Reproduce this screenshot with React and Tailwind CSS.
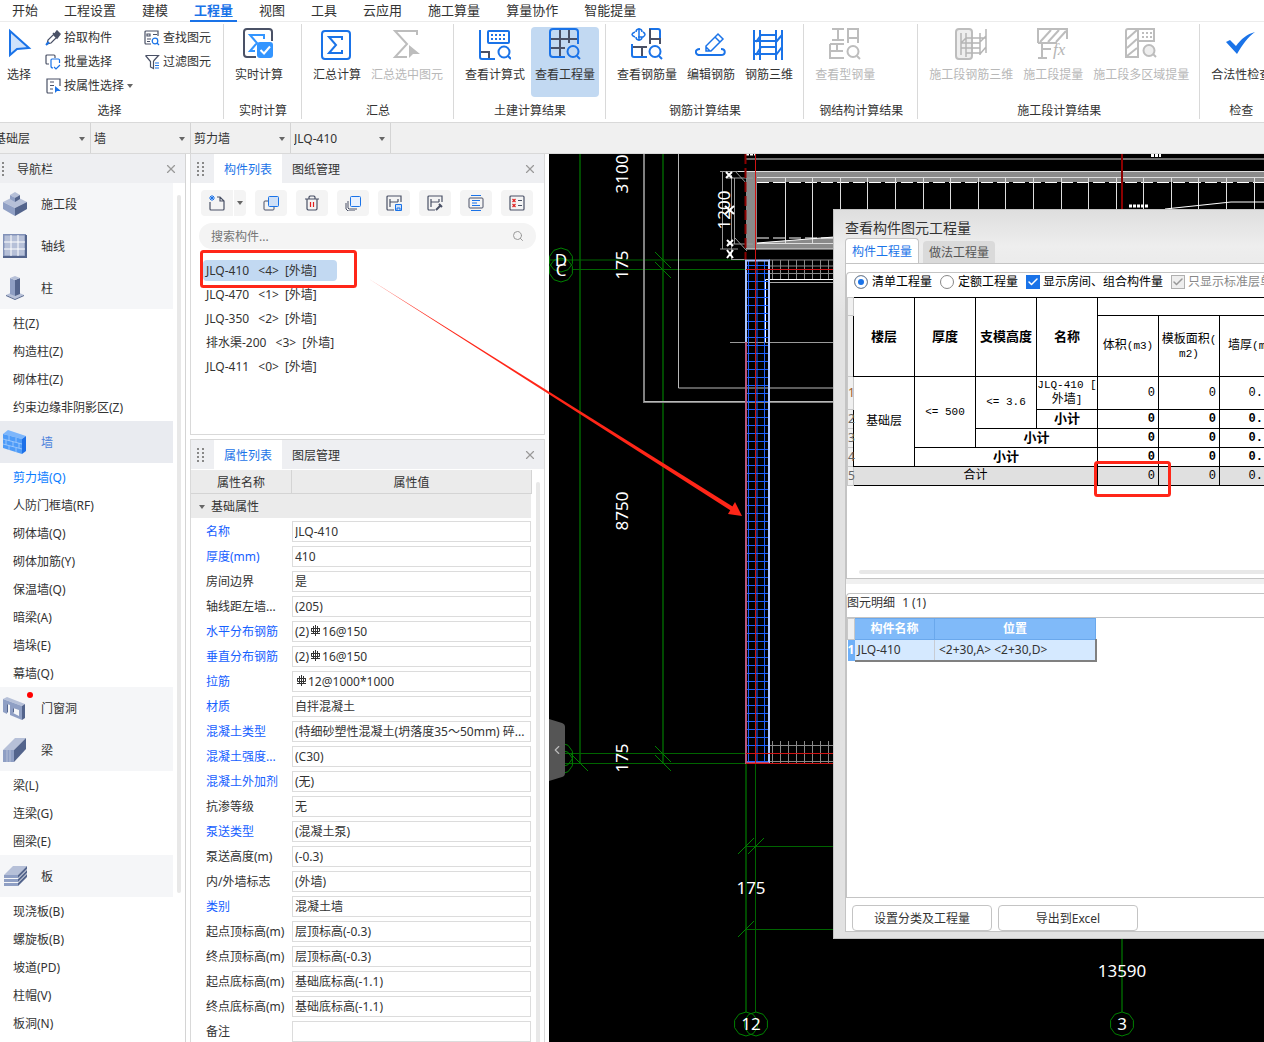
import React, { useState } from 'react';
import { X, Search, Check, ChevronLeft } from 'lucide-react';

const BLUE = '#1a73e8';
const DARK = '#4a5166';
const GRAY = '#bdbdbd';

const menuTabs = ['开始', '工程设置', '建模', '工程量', '视图', '工具', '云应用', '施工算量', '算量协作', '智能提量'];

/* ---------- ribbon icons ---------- */

const Svg = ({ size = 32, children, className = '' }) => (
  <svg
    viewBox={`0 0 ${size} ${size}`}
    width={size}
    height={size}
    fill="none"
    className={`shrink-0 ${className}`}
    aria-hidden="true"
  >
    {children}
  </svg>
);

const CursorIcon = () => (
  <Svg>
    <path d="M7 3v24l7-6 12-1z" fill="#cfe2fb" stroke={BLUE} strokeWidth="2" />
  </Svg>
);

const RealtimeIcon = () => (
  <Svg>
    <path d="M29 13V4a3 3 0 0 0-3-3H4a3 3 0 0 0-3 3v22a3 3 0 0 0 3 3h9" stroke={DARK} strokeWidth="2" />
    <path d="M21 11V7H7l7 8-7 8h5" stroke="#3395ff" strokeWidth="2" />
    <rect x="14" y="14" width="16" height="16" rx="3" fill="#3395ff" />
    <path d="m17.500 22 3.500 3.500 6-7" stroke="#fff" strokeWidth="2" />
  </Svg>
);

const SumIcon = () => (
  <Svg>
    <rect x="1" y="3" width="28" height="28" rx="3" stroke={BLUE} strokeWidth="2" />
    <path d="M21 12V9H8l7 8-7 8h13v-3" stroke={BLUE} strokeWidth="2" />
  </Svg>
);

const SumPickIcon = () => (
  <Svg>
    <path d="M26 7V3H4l12 13L4 29h12" stroke={GRAY} strokeWidth="2" />
    <path d="M18 17v13l4-4h7z" fill={GRAY} />
  </Svg>
);

const FormulaIcon = () => (
  <Svg>
    <path d="M1 2v27a2 2 0 0 0 2 2h13" stroke={BLUE} strokeWidth="2" />
    <path d="M2 24h8v6" stroke={DARK} strokeWidth="2" />
    <rect x="9" y="3" width="21" height="12" rx="1" stroke={BLUE} strokeWidth="2" />
    <path d="M12 7h15M12 11h15" stroke={BLUE} strokeWidth="2" strokeDasharray="2 2" />
    <circle cx="25" cy="24" r="5.500" stroke={BLUE} strokeWidth="2" />
    <path d="m29 28 3 3" stroke={BLUE} strokeWidth="2" />
  </Svg>
);

const QuantityIcon = () => (
  <Svg>
    <path d="M11 1v28M20 1v14M1 11h28M1 20h15" stroke={DARK} strokeWidth="2" />
    <path d="M29 16V4a3 3 0 0 0-3-3H4a3 3 0 0 0-3 3v22a3 3 0 0 0 3 3h12" stroke={BLUE} strokeWidth="2" />
    <circle cx="24" cy="23.500" r="5.500" stroke={BLUE} strokeWidth="2" />
    <path d="m28 28 3 3" stroke={BLUE} strokeWidth="2" />
  </Svg>
);

const RebarQtyIcon = () => (
  <Svg>
    <path d="M8 0v13M5 4a3 3 0 0 1 6 0M5 9a3 3 0 0 0 6 0M4 4q-6 2.500 0 5M12 4q4 2.500 0 5H7" stroke={BLUE} strokeWidth="1.500" />
    <path d="M19 16V1h8a2 2 0 0 1 2 2v12" stroke={BLUE} strokeWidth="2" />
    <path d="M19 16V1M19 11h10v5" stroke={DARK} strokeWidth="2" />
    <path d="M1 16v11a2 2 0 0 0 2 2h13" stroke={BLUE} strokeWidth="2" />
    <path d="M2 19h14M11 19v9" stroke={DARK} strokeWidth="2" />
    <circle cx="24" cy="23.500" r="5.500" stroke={BLUE} strokeWidth="2" />
    <path d="m28 28 3 3" stroke={BLUE} strokeWidth="2" />
  </Svg>
);

const EditRebarIcon = () => (
  <Svg>
    <path d="M5 21c-6 0-5 6 0 6h21c5 0 5-6 0-6" stroke={BLUE} strokeWidth="2" />
    <path d="M11 23v-5L23 6l5 5-12 12zM20 9l5 5M11 19l4 4" stroke={BLUE} strokeWidth="1.500" />
  </Svg>
);

const Rebar3dIcon = () => (
  <Svg>
    <path d="M1 2v30M7 2v30M23 2v30M29 2v30M7 7h16M1 13h22M7 19h16M1 26h22M3 14l5-7M23 14l6-7M3 27l5-8M23 27l6-8" stroke={BLUE} strokeWidth="2" />
  </Svg>
);

const SteelQtyIcon = () => (
  <Svg>
    <path d="M3 1h12M9 1v11M3 12h12M19 15V1h10v14M19 10h10M1 16v14h14M1 16h14M8 16v7M2 23h12" stroke={GRAY} strokeWidth="2" />
    <circle cx="24" cy="23.500" r="5.500" stroke={GRAY} strokeWidth="2" />
    <path d="m28 28 3 3" stroke={GRAY} strokeWidth="2" />
  </Svg>
);

const StageRebarIcon = () => (
  <Svg>
    <rect x="1" y="1" width="16" height="30" rx="3" fill="#eee" stroke={GRAY} strokeWidth="2" />
    <path d="M6 5v22M11 5v24M25 5v22M31 1v24M11 10h20M6 15h19M11 25h14M6 20h19M6 15l5-5M25 14l6-6M25 26l6-7" stroke="#b5b5b5" strokeWidth="1.500" />
  </Svg>
);

const StageExtractIcon = () => (
  <Svg>
    <path d="M1 15V1h29v10M1 15h19M3 14 14 2M11 14 22 2M19 14 29 3M5 16v14M1 30h9M6 21h8" stroke={GRAY} strokeWidth="2" />
    <text x="16" y="27" fontSize="17" fontStyle="italic" fill="#b5b5b5" className="font-['Liberation_Serif']">fx</text>
  </Svg>
);

const StageAreaIcon = () => (
  <Svg>
    <path d="M13 1H3a2 2 0 0 0-2 2v26h12zM2 11 12 2M2 20l10-9M2 28l10-8M13 1h16v12H13" stroke={GRAY} strokeWidth="2" />
    <path d="M17 5h11M17 9h11" stroke={GRAY} strokeWidth="2" strokeDasharray="2 2" />
    <circle cx="24" cy="22.500" r="5.500" fill="#eee" stroke={GRAY} strokeWidth="2" />
    <path d="m28 26 3 3" stroke={GRAY} strokeWidth="2" />
  </Svg>
);

const ValidateIcon = () => (
  <Svg>
    <path d="m1 14 4-2 6 6C16 11 22 6 30 4 23 9 17 17 12 26z" fill={BLUE} />
  </Svg>
);

const PickIcon = () => (
  <Svg size={16}>
    <path d="m2 14 1-4 6-6 3 3-6 6z" stroke={DARK} strokeWidth="1.200" />
    <path d="m8 3 5 5M9 5l3-4 3 3-3 4z" stroke={DARK} fill={DARK} strokeWidth="1.500" />
    <path d="m1 15 3-3" stroke={BLUE} strokeWidth="2" />
  </Svg>
);

const BatchIcon = () => (
  <Svg size={16}>
    <path d="M4 10H2a1 1 0 0 1-1-1V2a1 1 0 0 1 1-1h7a1 1 0 0 1 1 1v2" stroke={DARK} strokeWidth="1.200" />
    <path d="M14.500 9V6a1 1 0 0 0-1-1H7a1 1 0 0 0-1 1v6a2 2 0 0 0 2 2" stroke={BLUE} strokeWidth="1.200" />
    <path d="m9 13 2 2 4-4" stroke={BLUE} strokeWidth="1.200" />
  </Svg>
);

const AttrPickIcon = () => (
  <Svg size={16}>
    <path d="M8 15H3a1 1 0 0 1-1-1V1h13v7M5 4h4M5 7.500h4M5 11h3" stroke={DARK} strokeWidth="1.200" />
    <path d="M10 8v7l2-2h4z" fill={BLUE} />
  </Svg>
);

const FindIcon = () => (
  <Svg size={16}>
    <path d="M7 14H2a1 1 0 0 1-1-1V2a1 1 0 0 1 1-1h12v5M3 4h3v2H3zM9 4.500h4M3 9h4M3 11.500h3" stroke={DARK} strokeWidth="1.200" />
    <circle cx="11" cy="11" r="2.800" stroke={BLUE} strokeWidth="1.200" />
    <path d="m13 13 2 2" stroke={BLUE} strokeWidth="1.200" />
  </Svg>
);

const FilterIcon = () => (
  <Svg size={16}>
    <path d="M1.500 1.500h13L9.500 7M1.500 1.500l5 6V13l3 1.500V7" stroke={DARK} strokeWidth="1.200" />
    <path d="M11 9h4M11 11.500h4M11 14h4" stroke={BLUE} strokeWidth="1.200" />
  </Svg>
);

const Caret = ({ className = '' }) => (
  <svg viewBox="0 0 6 4" width="6" height="4" className={className} aria-hidden="true">
    <path d="M0 0h6L3 4z" fill="#666" />
  </svg>
);

/* ---------- ribbon ---------- */

const ribbonGroups = [
  { label: '实时计算', items: [{ text: '实时计算', icon: RealtimeIcon }] },
  {
    label: '汇总',
    items: [
      { text: '汇总计算', icon: SumIcon },
      { text: '汇总选中图元', icon: SumPickIcon, disabled: true },
    ],
  },
  {
    label: '土建计算结果',
    items: [
      { text: '查看计算式', icon: FormulaIcon },
      { text: '查看工程量', icon: QuantityIcon, active: true },
    ],
  },
  {
    label: '钢筋计算结果',
    items: [
      { text: '查看钢筋量', icon: RebarQtyIcon },
      { text: '编辑钢筋', icon: EditRebarIcon },
      { text: '钢筋三维', icon: Rebar3dIcon },
    ],
  },
  { label: '钢结构计算结果', items: [{ text: '查看型钢量', icon: SteelQtyIcon, disabled: true }] },
  {
    label: '施工段计算结果',
    items: [
      { text: '施工段钢筋三维', icon: StageRebarIcon, disabled: true },
      { text: '施工段提量', icon: StageExtractIcon, disabled: true },
      { text: '施工段多区域提量', icon: StageAreaIcon, disabled: true },
    ],
  },
  { label: '检查', items: [{ text: '合法性检查', icon: ValidateIcon }] },
];

const RibbonButton = ({ item }) => {
  const Icon = item.icon;
  return (
    <button
      disabled={item.disabled}
      className={`mx-px flex h-[70px] flex-col items-center rounded-sm px-1 pt-px ${
        item.active ? 'bg-[#c2d9f2]' : ''
      } ${item.disabled ? 'text-[#b8b8b8]' : ''}`}
    >
      <Icon />
      <span className="mt-[7px]">{item.text}</span>
    </button>
  );
};

const SmallTool = ({ icon: Icon, text, caret }) => (
  <button className="flex h-6 items-center gap-[3px]">
    <Icon />
    <span>{text}</span>
    {caret && <Caret />}
  </button>
);

const Ribbon = () => (
  <div className="flex h-[101px] shrink-0 overflow-hidden border-b border-[#d9d9d9] bg-white pt-0.5 pb-[3px]">
    <section className="flex w-[224px] shrink-0 flex-col border-r border-[#d9d9d9] pt-[3px]">
      <div className="flex flex-1">
        <button className="flex h-[70px] w-[38px] flex-col items-center pt-px">
          <CursorIcon />
          <span className="mt-[7px]">选择</span>
        </button>
        <div className="-mt-px ml-[7px] flex w-[99px] flex-col items-start">
          <SmallTool icon={PickIcon} text="拾取构件" />
          <SmallTool icon={BatchIcon} text="批量选择" />
          <SmallTool icon={AttrPickIcon} text="按属性选择" caret />
        </div>
        <div className="-mt-px flex flex-col">
          <SmallTool icon={FindIcon} text="查找图元" />
          <SmallTool icon={FilterIcon} text="过滤图元" />
        </div>
      </div>
      <div className="pr-1 text-center">选择</div>
    </section>
    {ribbonGroups.map((group) => (
      <section key={group.label} className="flex shrink-0 flex-col border-r border-[#d9d9d9] pt-[3px]">
        <div className="flex flex-1 pr-[5px] pl-1.5">
          {group.items.map((item) => (
            <RibbonButton key={item.text} item={item} />
          ))}
        </div>
        <div className="pr-3.5 pl-[15px] text-center">{group.label}</div>
      </section>
    ))}
  </div>
);

const SelectorBar = () => (
  <div className="flex h-[31px] shrink-0 overflow-hidden border-b border-[#d9d9d9] bg-[#f0f0f0]">
    <div className="-ml-[9px] flex">
      {['基础层', '墙', '剪力墙', 'JLQ-410'].map((value) => (
        <div key={value} className="relative w-[100px] border-r border-[#d4d4d4]">
          <select aria-label={value} className="h-full w-full appearance-none bg-transparent pt-0.5 pl-[3px] outline-none">
            <option>{value}</option>
          </select>
          <Caret className="pointer-events-none absolute top-3.5 right-[5px]" />
        </div>
      ))}
    </div>
  </div>
);

/* ---------- left navigation ---------- */

const StageIcon = () => (
  <Svg size={24}>
    <path d="m0 10 12-6 12 6-12 6z" fill="#b6c0d8" />
    <path d="M0 10v7l12 7v-8z" fill="#8f9fc4" />
    <path d="M24 10v7l-12 7v-8z" fill="#53648c" />
    <path d="m7 3 5-3 5 3-5 3z" fill="#b6c0d8" />
    <path d="M7 3v4l5 3V6z" fill="#8f9fc4" />
    <path d="M17 3v4l-5 3V6z" fill="#53648c" />
  </Svg>
);

const AxisIcon = () => (
  <Svg size={24}>
    <path d="M0 0h23v24H0z" fill="#8191b8" />
    <path d="M1.500 1.500h20v20h-20z" fill="#b6c0d8" />
    <path d="M8 1v21M15 1v21M1 8h21M1 15h21" stroke="#fff" />
    <path d="M0 23h23V1" stroke="#53648c" strokeWidth="2" />
  </Svg>
);

const ColumnIcon = () => (
  <Svg size={24}>
    <path d="m3 19 9-4 9 4-9 4z" fill="#b6c0d8" />
    <path d="m3 19 9 4 9-4v1l-9 4-9-4z" fill="#53648c" />
    <path d="M7 2v16l5 2V4z" fill="#8f9fc4" />
    <path d="M17 2v16l-5 2V4z" fill="#53648c" />
    <path d="m7 2 5-2 5 2-5 2z" fill="#b6c0d8" />
  </Svg>
);

const WallIcon = () => (
  <Svg size={24}>
    <path d="m0 4 5-4 18 6-4 3z" fill="#7db6fb" />
    <path d="m0 4 19 5v15L0 18z" fill="#4d9bf8" />
    <path d="m23 6-4 3v15l4-3z" fill="#1d70e8" />
    <path d="m0 9 19 5M0 14l19 5M6 6v5M13 8v4M3 10v5M10 12v5M16 13v5M6 16v4M13 18v4" stroke="#a9cffc" strokeWidth="0.800" />
  </Svg>
);

const DoorIcon = () => (
  <Svg size={24}>
    <path d="m0 3 4-2 18 7-3 2z" fill="#b6c0d8" />
    <path d="m22 8-3 2v14l3-2z" fill="#53648c" />
    <path d="M0 3 19 10v14L7 19V9L4 8v10l-4-2zM10 12v5l6 3v-6z" fill="#8f9fc4" fillRule="evenodd" />
    <path d="M4 8v9l1-1V8.500zM10 12v5l1-1v-3.500z" fill="#53648c" />
  </Svg>
);

const BeamIcon = () => (
  <Svg size={24}>
    <path d="M0 12 12 0h11L11 12z" fill="#b6c0d8" />
    <path d="M0 12h11v12H0z" fill="#8f9fc4" />
    <path d="M11 12 23 0v11L11 24z" fill="#53648c" />
    <path d="M4 12v12M7 12v12" stroke="#b6c0d8" />
  </Svg>
);

const SlabIcon = () => (
  <Svg size={24}>
    <path d="M1 11 10 2h14l-9 9z" fill="#b6c0d8" />
    <path d="M1 11h14v3H1zM1 15h14v3H1zM1 19h14v3H1z" fill="#8f9fc4" />
    <path d="m15 11 9-9v3l-9 9zM15 15l9-9v3l-9 9zM15 19l9-9v3l-9 9z" fill="#53648c" />
  </Svg>
);

const navItems = [
  { text: '施工段', icon: StageIcon },
  { text: '轴线', icon: AxisIcon },
  { text: '柱', icon: ColumnIcon, children: ['柱(Z)', '构造柱(Z)', '砌体柱(Z)', '约束边缘非阴影区(Z)'] },
  {
    text: '墙',
    icon: WallIcon,
    active: true,
    children: ['剪力墙(Q)', '人防门框墙(RF)', '砌体墙(Q)', '砌体加筋(Y)', '保温墙(Q)', '暗梁(A)', '墙垛(E)', '幕墙(Q)'],
  },
  { text: '门窗洞', icon: DoorIcon, badge: true },
  { text: '梁', icon: BeamIcon, children: ['梁(L)', '连梁(G)', '圈梁(E)'] },
  { text: '板', icon: SlabIcon, children: ['现浇板(B)', '螺旋板(B)', '坡道(PD)', '柱帽(V)', '板洞(N)'] },
];

const Grip = ({ cols = 2 }) => (
  <svg width={cols * 5} height="14" className="shrink-0" aria-hidden="true">
    {[0, 4, 8, 12].map((y) =>
      [...Array(cols)].map((_, i) => <rect key={`${y}-${i}`} x={i * 5} y={y} width="2" height="2" fill="#888" />)
    )}
  </svg>
);

const CloseButton = () => (
  <button aria-label="关闭" className="text-[#999]">
    <X size={14} strokeWidth={2} />
  </button>
);

const Navigator = () => {
  const [selected, setSelected] = useState('剪力墙(Q)');
  return (
    <aside className="flex w-[186px] shrink-0 flex-col border-r border-[#d4d4d4] bg-white">
      <header className="flex h-[29px] shrink-0 items-center bg-[#eeeff2] pr-[7px] pl-0.5">
        <Grip cols={1} />
        <h2 className="ml-2.5 flex-1 pt-0.5">导航栏</h2>
        <CloseButton />
      </header>
      <div className="flex min-h-0 flex-1">
        <nav className="w-[173px] overflow-hidden">
          {navItems.map((item) => {
            const Icon = item.icon;
            return (
              <div key={item.text}>
                <button
                  className={`flex h-[42px] w-full items-center pl-[3px] ${
                    item.active ? 'bg-[#e9ebf0] text-[#4a7fdb]' : 'bg-[#f5f6f8]'
                  }`}
                >
                  <span className="relative mr-3.5">
                    <Icon />
                    {item.badge && <i className="absolute -top-1 -right-1.5 size-1.5 rounded-full bg-[#ff0000]" />}
                  </span>
                  <span className="pt-0.5">{item.text}</span>
                </button>
                {item.children?.map((child) => (
                  <button
                    key={child}
                    onClick={() => setSelected(child)}
                    className={`flex h-7 w-full items-center pt-0.5 pl-[13px] ${selected === child ? 'text-[#0a7cff]' : ''}`}
                  >
                    {child}
                  </button>
                ))}
              </div>
            );
          })}
        </nav>
        <div className="mt-3 ml-1 h-[698px] w-1 rounded-full bg-[#e8e8e8]" />
      </div>
    </aside>
  );
};

/* ---------- component list ---------- */

const PanelHeader = ({ tabs }) => (
  <header className="flex h-[29px] shrink-0 items-stretch bg-[#eeeff2] pr-[7px]">
    <div className="flex w-[23px] items-center pl-1.5">
      <Grip />
    </div>
    {tabs.map((tab, i) => (
      <button key={tab} className={`px-2.5 pt-0.5 ${i === 0 ? 'bg-white text-[#1a73e8]' : ''}`}>
        {tab}
      </button>
    ))}
    <div className="ml-auto flex items-center">
      <CloseButton />
    </div>
  </header>
);

const tools = [
  {
    name: '复制',
    art: (
      <>
        <path d="M5 6H2a1 1 0 0 0-1 1v7a1 1 0 0 0 1 1h8a1 1 0 0 0 1-1v-2" stroke={DARK} />
        <rect x="5.500" y="1.500" width="10" height="10" rx="1" fill="#cfe0f7" stroke={BLUE} />
      </>
    ),
  },
  {
    name: '删除',
    art: (
      <>
        <path d="M1 4h14M5 4V2l1-1h4l1 1v2M3 4v10l1 1h8l1-1V4" stroke={DARK} strokeWidth="1.200" />
        <path d="M6.500 7v5M9.500 7v5" stroke="#e02020" strokeWidth="1.200" />
      </>
    ),
  },
  {
    name: '层间复制',
    art: (
      <>
        <path d="M3 6v7l1 1h8M1 8v6l2 2h7" stroke={DARK} />
        <rect x="5.500" y="1.500" width="10" height="10" rx="1" fill="#e8f1ff" stroke={BLUE} />
      </>
    ),
  },
  {
    name: '存档',
    art: (
      <>
        <path d="M8 15H2a1 1 0 0 1-1-1V2a1 1 0 0 1 1-1h13v6M4 4v8M4 7h8M12 4v3" stroke={DARK} strokeWidth="1.200" />
        <path d="M9.500 9.500h6v6h-6z" fill="#cfe0f7" stroke={BLUE} />
        <path d="M11 15v-2h3v2" stroke={BLUE} />
      </>
    ),
  },
  {
    name: '提取',
    art: (
      <>
        <path d="M8 15H2a1 1 0 0 1-1-1V2a1 1 0 0 1 1-1h13v6M4 4v8M4 7h8M12 4v3" stroke={DARK} strokeWidth="1.200" />
        <path d="m9 15 5-5M12 9l3 3" stroke={DARK} strokeWidth="2" />
      </>
    ),
  },
  {
    name: '排序',
    art: (
      <>
        <path d="M3 .5h10M3 15.500h10M4 5.500h8M4 8h5M4 10.500h8" stroke={BLUE} strokeWidth="1.200" />
        <rect x="1" y="3" width="14" height="10" rx="1" stroke={DARK} />
      </>
    ),
  },
  {
    name: '检查',
    art: (
      <>
        <rect x="1" y="1" width="14" height="14" rx="1" stroke={DARK} strokeWidth="1.200" />
        <path d="M9 5.500h4M9 10.500h4" stroke={DARK} />
        <path d="m3.500 4 3 3M6.500 4l-3 3M3.500 9l3 3M6.500 9l-3 3" stroke="#e02020" strokeWidth="1.200" />
      </>
    ),
  },
];

const components = [
  ['JLQ-410', '<4>', '[外墙]'],
  ['JLQ-470', '<1>', '[外墙]'],
  ['JLQ-350', '<2>', '[外墙]'],
  ['排水渠-200', '<3>', '[外墙]'],
  ['JLQ-411', '<0>', '[外墙]'],
];

const ComponentList = () => {
  const [selected, setSelected] = useState('JLQ-410');
  return (
    <section className="h-[281px] shrink-0 border border-t-0 border-[#d9d9d9] bg-white">
      <PanelHeader tabs={['构件列表', '图纸管理']} />
      <div className="mt-[7px] ml-2.5 flex gap-[9px]">
        <div className="flex gap-px">
          <button aria-label="新建" className="flex h-[26px] w-8 items-center justify-center rounded-l bg-[#f4f4f4]">
            <Svg size={16}>
              <path d="M1 7v7a1 1 0 0 0 1 1h12a1 1 0 0 0 1-1V6l-4-4H8M11 2v4h4" stroke={DARK} strokeWidth="1.200" />
              <path d="m1 1 4 4M5 1 1 5M3 0v6M0 3h6" stroke={BLUE} />
            </Svg>
          </button>
          <button aria-label="更多" className="flex h-[26px] w-3 items-center justify-center rounded-r bg-[#f4f4f4]">
            <Caret />
          </button>
        </div>
        {tools.map((tool) => (
          <button
            key={tool.name}
            aria-label={tool.name}
            className="flex h-[26px] w-8 items-center justify-center rounded bg-[#f4f4f4]"
          >
            <Svg size={16}>{tool.art}</Svg>
          </button>
        ))}
      </div>
      <label className="mx-2 mt-[7px] flex h-[26px] items-center rounded-full bg-[#f4f4f4] px-3">
        <input
          aria-label="搜索构件"
          placeholder="搜索构件..."
          className="flex-1 bg-transparent pt-0.5 outline-none placeholder:text-[#757575]"
        />
        <Search size={12} className="text-[#999]" />
      </label>
      <ul className="mt-2.5 ml-3">
        {components.map(([name, count, type]) => (
          <li key={name} className="h-6 py-px">
            <button
              onClick={() => setSelected(name)}
              className={`flex h-[21px] w-[134px] items-center rounded-sm pl-[3px] whitespace-pre ${
                selected === name ? 'bg-[#c2d9f2]' : ''
              }`}
            >
              {name} <span className="mx-1.5">{count}</span> {type}
            </button>
          </li>
        ))}
      </ul>
    </section>
  );
};

/* ---------- property list ---------- */

const properties = [
  { label: '名称', value: 'JLQ-410', key: true },
  { label: '厚度(mm)', value: '410', key: true },
  { label: '房间边界', value: '是' },
  { label: '轴线距左墙...', value: '(205)' },
  { label: '水平分布钢筋', prefix: '(2)', value: '16@150', rebar: true, key: true },
  { label: '垂直分布钢筋', prefix: '(2)', value: '16@150', rebar: true, key: true },
  { label: '拉筋', value: '12@1000*1000', rebar: true, key: true },
  { label: '材质', value: '自拌混凝土', key: true },
  { label: '混凝土类型', value: '(特细砂塑性混凝土(坍落度35～50mm) 碎...', key: true },
  { label: '混凝土强度...', value: '(C30)', key: true },
  { label: '混凝土外加剂', value: '(无)', key: true },
  { label: '抗渗等级', value: '无' },
  { label: '泵送类型', value: '(混凝土泵)', key: true },
  { label: '泵送高度(m)', value: '(-0.3)' },
  { label: '内/外墙标志', value: '(外墙)' },
  { label: '类别', value: '混凝土墙', key: true },
  { label: '起点顶标高(m)', value: '层顶标高(-0.3)' },
  { label: '终点顶标高(m)', value: '层顶标高(-0.3)' },
  { label: '起点底标高(m)', value: '基础底标高(-1.1)' },
  { label: '终点底标高(m)', value: '基础底标高(-1.1)' },
  { label: '备注', value: '' },
];

const PropertyList = () => (
  <section className="mt-1 flex min-h-0 flex-1 flex-col border border-b-0 border-[#d9d9d9] bg-white">
    <PanelHeader tabs={['属性列表', '图层管理']} />
    <div className="mt-px flex min-h-0 flex-1">
      <div className="w-[341px] shrink-0 overflow-hidden">
        <div className="flex h-6 border-r border-b border-[#d4d4d4] bg-[#ebebeb] text-center leading-[26px]">
          <div className="w-[101px] border-r border-[#d4d4d4]">属性名称</div>
          <div className="flex-1">属性值</div>
        </div>
        <button className="flex h-6 w-[340px] items-center gap-1.5 bg-[#ebebeb] pt-0.5 pl-2">
          <Caret />
          基础属性
        </button>
        <div className="pt-px">
          {properties.map((p, i) => (
            <div key={p.label} className="flex h-[25px] items-center">
              <label
                htmlFor={`prop-${i}`}
                className={`w-[101px] pl-[15px] whitespace-nowrap ${p.key ? 'text-[#1660ff]' : ''}`}
              >
                {p.label}
              </label>
              <div className="flex h-[21px] w-[239px] items-center border border-[#dcdcdc] pl-0.5">
                {p.prefix && <span>{p.prefix}</span>}
                {p.rebar && (
                  <svg viewBox="0 0 11 14" width="11" height="14" fill="none" stroke="#333" className="mx-px shrink-0" aria-hidden="true">
                    <path d="M5.500 0v11M3.500 1v8M7.500 1v8M1 8.500h9M1.500 3.500h8M1.500 3v3.500h8V3" />
                  </svg>
                )}
                <input id={`prop-${i}`} defaultValue={p.value} className="w-full min-w-0 bg-transparent outline-none" />
              </div>
            </div>
          ))}
        </div>
      </div>
      <div className="mt-3 ml-1 w-1 rounded-t-full bg-[#e8e8e8]" />
    </div>
  </section>
);

/* ---------- drawing canvas ---------- */

const range = (start, end, step) => {
  const out = [];
  for (let v = start; v < end; v += step) out.push(v);
  return out;
};

const bubble = (cx, cy) => {
  const pts = [];
  for (let i = 0; i < 10; i++) {
    const a = (Math.PI * 2 * i) / 10;
    pts.push(`${(cx + 12 * Math.sin(a)).toFixed(1)},${(cy - 12 * Math.cos(a)).toFixed(1)}`);
  }
  return <polygon key={`${cx}-${cy}`} points={pts.join(' ')} stroke="#008000" fill="none" />;
};

const VText = ({ x, y, children }) => (
  <text transform={`translate(${x} ${y}) rotate(-90)`} textAnchor="middle" dominantBaseline="central">
    {children}
  </text>
);

const Drawing = () => (
  <svg className="absolute inset-0 h-full w-full" fill="none" aria-label="平面图">
    <g transform="translate(-549 -154)">
      {/* axis grid */}
      <path d="M580 154v609M663 154v609M746 764v248M1122 938v74" stroke="#004a00" strokeWidth="2" />
      <path d="M549 260h197M573 269.500h173M549 753.500h197M549 763.500h197M755.500 764v248M746 846.500h88M746 929.500h88" stroke="#006400" />
      <path d="m655 252 16 16M655 262l16 16M571 754l17 17M655 746l16 16M655 755l16 16M738 854l16-16M748 854l16-16M738 937l16-16" stroke="#008000" />
      {bubble(561, 260)}
      {bubble(561, 270)}
      {bubble(561, 755)}
      {bubble(561, 762)}
      {bubble(746, 1024)}
      {bubble(756, 1024)}
      {bubble(1122, 1024)}

      {/* outlines */}
      <path d="M644 154v248h190" stroke="#808080" strokeWidth="2" />
      <path d="M644 401.500h190M678.500 154v234H834" stroke="#b8b8b8" />
      <path d="M730 342.500h104" stroke="#9a9a9a" />

      {/* stair slab on top */}
      <path d="M746 172h518v10H757v67h-11z" fill="#8a8a8a" />
      <path d="M757 182h507v56H757z" fill="#000" />
      <path d="m757 243 77-6v7H757zM746 244h88v5h-88z" fill="#8a8a8a" />
      <path d="M746 159h518M757 177.500h507M757 243.500h77M737 171.500h527M746 249h88" stroke="#ddd" />
      <path d="M757 182.500h507M757 238h77" stroke="#fff" strokeDasharray="12 4" />
      <path d={range(784.5, 1264, 27.6).map((x) => `M${Math.round(x) + 0.5} 178v65`).join('')} stroke="#ddd" />
      <path d="m757 243 77-6M1165 209l66-7h33" stroke="#fff" />
      <path d="M722.500 172v77M731.500 175v84M734.500 178v66M720 171.500h18M720 249h18M727 178h26M727 244h26M731 259.500h15M735 171l12 13M735 238l12 13" stroke="#999" />
      <path d="M726 172l6 6M732 172l-6 6M727 240l6 6M733 240l-6 6M727 250l6 8M733 250l-6 8M725 206l9 8M725 214l9-8" stroke="#fff" strokeWidth="2" />
      <path d="M1151 155.500h10M1129 206h20M746 154h10" stroke="#fff" strokeWidth="3" strokeDasharray="3 1" />
      <path d="M745.500 154v106" stroke="#8b0000" strokeWidth="2" strokeDasharray="10 4" />
      <path d="M1122 154v56" stroke="#8b0000" strokeWidth="2" />

      {/* hatched walls */}
      <path
        d={'M769 260h65M769 266h65M769 273.500h65' + range(772.5, 834, 8).map((x) => `M${x} 260v20`).join('')}
        stroke="#8a8a8a"
      />
      <path
        d={'M769 745.500h65M769 761.500h65' + range(772.5, 834, 8).map((x) => `M${x} 741v22`).join('')}
        stroke="#8a8a8a"
      />
      <path d="M765.500 342v-62.500H834" stroke="#fff" />
      <path d="M769 282.500h65" stroke="#aaa" />

      {/* selected shear wall */}
      <path
        d={'M748.500 261v502M757 261v502M764.500 261v502' + range(265.5, 763, 8).map((y) => `M746 ${y}h22`).join('')}
        stroke="#1e62ff"
      />
      <path d="M746 342v-81.500h23V763" stroke="#a9c4ff" strokeWidth="2" />
      <path d="M746 342v421h23" stroke="#b8557c" strokeWidth="2" />
      <path d="M755.500 154v609M746 269.500h88M746 753.500h88M746 763.500h88" stroke="#d01414" />

      {/* dimension texts */}
      <g fill="#fff" fontSize="17" className="font-['Noto_Sans']">
        <VText x={621} y={174}>3100</VText>
        <VText x={621} y={265}>175</VText>
        <VText x={723} y={210}>1200</VText>
        <VText x={621} y={511}>8750</VText>
        <VText x={621} y={758}>175</VText>
        <g textAnchor="middle">
          <text x="561" y="266">D</text>
          <text x="561" y="276">C</text>
          <text x="751" y="894">175</text>
          <text x="751" y="1030">12</text>
          <text x="1122" y="977">13590</text>
          <text x="1122" y="1030">3</text>
        </g>
      </g>
    </g>
  </svg>
);

/* ---------- quantity dialog ---------- */

const RadioOption = ({ text, ...props }) => (
  <label className="flex items-center gap-1">
    <input
      type="radio"
      name="quantity-type"
      className="size-3.5 appearance-none rounded-full border border-[#888] bg-white checked:bg-[#1a73e8] checked:shadow-[inset_0_0_0_3px_white]"
      {...props}
    />
    {text}
  </label>
);

const CheckOption = ({ text, disabled }) => (
  <label className={`relative flex items-center gap-[3px] whitespace-nowrap ${disabled ? 'text-[#888]' : ''}`}>
    <input
      type="checkbox"
      defaultChecked
      disabled={disabled}
      className="peer size-3.5 shrink-0 appearance-none border border-[#1a73e8] bg-[#1a73e8] disabled:border-[#b0b0b0] disabled:bg-[#eee]"
    />
    <Check size={12} strokeWidth={3} className="absolute left-px text-white peer-disabled:text-[#999]" />
    {text}
  </label>
);

const cell = 'border border-black p-0 text-center';
const num = 'border border-black p-0 pr-[3px] text-right text-xs';
const wideNum = 'border border-black p-0 pr-[17px] text-right text-xs';
const rowNo = "border border-[#c8c8c8] bg-[#f0f0f0] p-0 text-center font-['Noto_Sans'] text-xs font-normal";

const QuantityTable = () => (
  <table className="w-[494px] table-fixed border-collapse font-['Liberation_Mono','Noto_Sans_CJK_SC',monospace] text-[11px] leading-[13px] text-black">
    <colgroup>
      <col className="w-1.5" />
      {[...Array(8)].map((_, i) => (
        <col key={i} className="w-[61px]" />
      ))}
    </colgroup>
    <thead>
      <tr className="h-[18px] text-[13px]">
        <th className={rowNo} />
        <th rowSpan={2} className={cell}>楼层</th>
        <th rowSpan={2} className={cell}>厚度</th>
        <th rowSpan={2} className={cell}>支模高度</th>
        <th rowSpan={2} className={cell}>名称</th>
        <th colSpan={4} className={cell} />
      </tr>
      <tr className="h-[61px]">
        <th className={rowNo} />
        <td className={cell}><span className="text-xs">体积</span>(m3)</td>
        <td className={cell}><span className="text-xs">模板面积</span>(<br />m2)</td>
        <td className={`${cell} whitespace-nowrap`}><span className="text-xs">墙厚</span>(m)</td>
        <td className={cell} />
      </tr>
    </thead>
    <tbody>
      <tr className="h-[33px]">
        <th className={`${rowNo} text-[#a0622d]`}>1</th>
        <td rowSpan={4} className={`${cell} text-xs`}>基础层</td>
        <td rowSpan={3} className={cell}>&lt;= 500</td>
        <td rowSpan={2} className={cell}>&lt;= 3.6</td>
        <td className={cell}>JLQ-410 [<br /><span className="text-xs">外墙</span>]</td>
        <td className={num}>0</td>
        <td className={num}>0</td>
        <td className={wideNum}>0.</td>
        <td className={cell} />
      </tr>
      {[1, 2, 3].map((span) => (
        <tr key={span} className="h-[19px] font-bold">
          <th className={`${rowNo} text-[#666]`}>{span + 1}</th>
          <td colSpan={span} className={`${cell} text-[13px]`}>小计</td>
          <td className={num}>0</td>
          <td className={num}>0</td>
          <td className={wideNum}>0.</td>
          <td className={cell} />
        </tr>
      ))}
      <tr className="h-[19px] bg-[#e0e0e0]">
        <th className={`${rowNo} text-[#666]`}>5</th>
        <td colSpan={4} className={`${cell} text-xs`}>合计</td>
        <td className={num}>0</td>
        <td className={num}>0</td>
        <td className={wideNum}>0.</td>
        <td className={cell} />
      </tr>
    </tbody>
  </table>
);

const DetailTable = () => (
  <table className="w-[248px] table-fixed border-collapse">
    <colgroup>
      <col className="w-[7px]" />
      <col className="w-20" />
      <col className="w-[161px]" />
    </colgroup>
    <thead>
      <tr className="h-[21px] bg-[#80baf9] text-white">
        <th className="border border-[#c8c8c8] bg-[#f0f0f0] p-0" />
        <th className="border border-[#6aa8ec] p-0">构件名称</th>
        <th className="border border-[#6aa8ec] p-0">位置</th>
      </tr>
    </thead>
    <tbody>
      <tr className="h-[21px] bg-[#d5e9ff]">
        <th className="bg-[#6fb0f8] p-0 text-white">1</th>
        <td className="border-r border-b-2 border-r-[#c8ccd4] border-b-[#808080] p-0 pl-[3px]">JLQ-410</td>
        <td className="border-r-2 border-b-2 border-r-[#808080] border-b-[#808080] p-0 pl-1">
          &lt;2+30,A&gt; &lt;2+30,D&gt;
        </td>
      </tr>
    </tbody>
  </table>
);

const QuantityDialog = () => (
  <div
    role="dialog"
    aria-label="查看构件图元工程量"
    className="absolute top-[55px] left-[284px] flex h-[730px] w-[520px] flex-col border border-[#c4c4c4] bg-linear-to-b from-[#dedede] via-[#eeeeee] via-5% to-[#e2e2e2] to-15% pb-1.5 pl-[11px]"
  >
    <h2 className="mt-2 text-sm leading-5">查看构件图元工程量</h2>
    <div className="flex items-end gap-1">
      <button className="-mb-px h-[26px] rounded-t border border-b-0 border-[#c4c4c4] bg-white px-1.5 text-[#1a73e8]">构件工程量</button>
      <button className="h-[22px] rounded-t bg-[#dadada] px-1.5 pt-0.5 text-[#555]">做法工程量</button>
    </div>
    <div className="flex flex-1 flex-col border-t border-b border-l border-[#c4c4c4] bg-white">
      <div className="mt-2 h-[307px] rounded-tl border-t border-b border-l border-[#c4c4c4]">
        <div className="flex h-6 items-center gap-2 pb-1.5 pl-[7px] text-black">
          <RadioOption text="清单工程量" defaultChecked />
          <RadioOption text="定额工程量" />
          <CheckOption text="显示房间、组合构件量" />
          <CheckOption text="只显示标准层单层量" disabled />
        </div>
        <QuantityTable />
        <div className="mt-21 ml-3 h-1 rounded-full bg-[#e8e8e8]" />
      </div>
      <div className="h-[5px] bg-[#f0f0f0]" />
      <div className="mt-[9px] flex-1 rounded-tl border-t border-b border-l border-[#c4c4c4]">
        <div className="h-6 border-b border-[#c4c4c4] leading-[18px]">
          图元明细 <span className="ml-1">1 (1)</span>
        </div>
        <DetailTable />
      </div>
      <div className="mt-[7px] flex gap-1.5 pl-1.5">
        <button className="h-[26px] w-[140px] rounded border border-[#c4c4c4] bg-white pt-0.5">设置分类及工程量</button>
        <button className="h-[26px] w-[140px] rounded border border-[#c4c4c4] bg-white pt-0.5">导出到Excel</button>
      </div>
    </div>
  </div>
);

const Canvas = () => (
  <main className="relative min-w-0 flex-1 overflow-hidden bg-black">
    <Drawing />
    <button aria-label="收起" className="absolute top-[565px] left-0 flex h-[62px] w-4 items-center justify-center">
      <svg className="absolute inset-0" width="16" height="62" aria-hidden="true">
        <path d="M0 0l13 4q3 1 3 4v46q0 3-3 4L0 62z" fill="#555" />
      </svg>
      <ChevronLeft size={14} className="relative text-[#bbb]" />
    </button>
    <QuantityDialog />
  </main>
);

/* red marks drawn over the workspace */
const Annotations = () => (
  <svg className="pointer-events-none absolute inset-0 h-full w-full" fill="none" aria-hidden="true">
    <rect x="201.500" y="251.500" width="154" height="35" rx="2" stroke="#ff2618" strokeWidth="3" />
    <rect x="1095.500" y="462.500" width="74" height="33" rx="2" stroke="#ff2618" strokeWidth="3" />
    <path d="m369 279 366 229-2 4z" fill="#ff2618" />
    <path d="m742 516-14-2 7-12z" fill="#ff2618" />
  </svg>
);

const App = () => (
  <div className="relative flex h-screen flex-col overflow-hidden bg-white font-['Noto_Sans','Noto_Sans_CJK_SC',sans-serif] text-xs leading-4 text-[#333]">
    <nav className="flex h-[22px] shrink-0 gap-[18px] border-b border-[#ececec] pl-2 text-[13px]">
      {menuTabs.map((tab) => (
        <button
          key={tab}
          className={`flex h-[22px] justify-center px-1 leading-5 ${
            tab === '工程量' ? 'border-b-2 border-[#1a73e8] font-bold text-[#1a73e8]' : ''
          }`}
        >
          {tab}
        </button>
      ))}
    </nav>
    <Ribbon />
    <SelectorBar />
    <div className="flex min-h-0 flex-1">
      <Navigator />
      <div className="mr-1 ml-1 flex w-[355px] shrink-0 flex-col">
        <ComponentList />
        <PropertyList />
      </div>
      <Canvas />
    </div>
    <Annotations />
  </div>
);

export default App;
